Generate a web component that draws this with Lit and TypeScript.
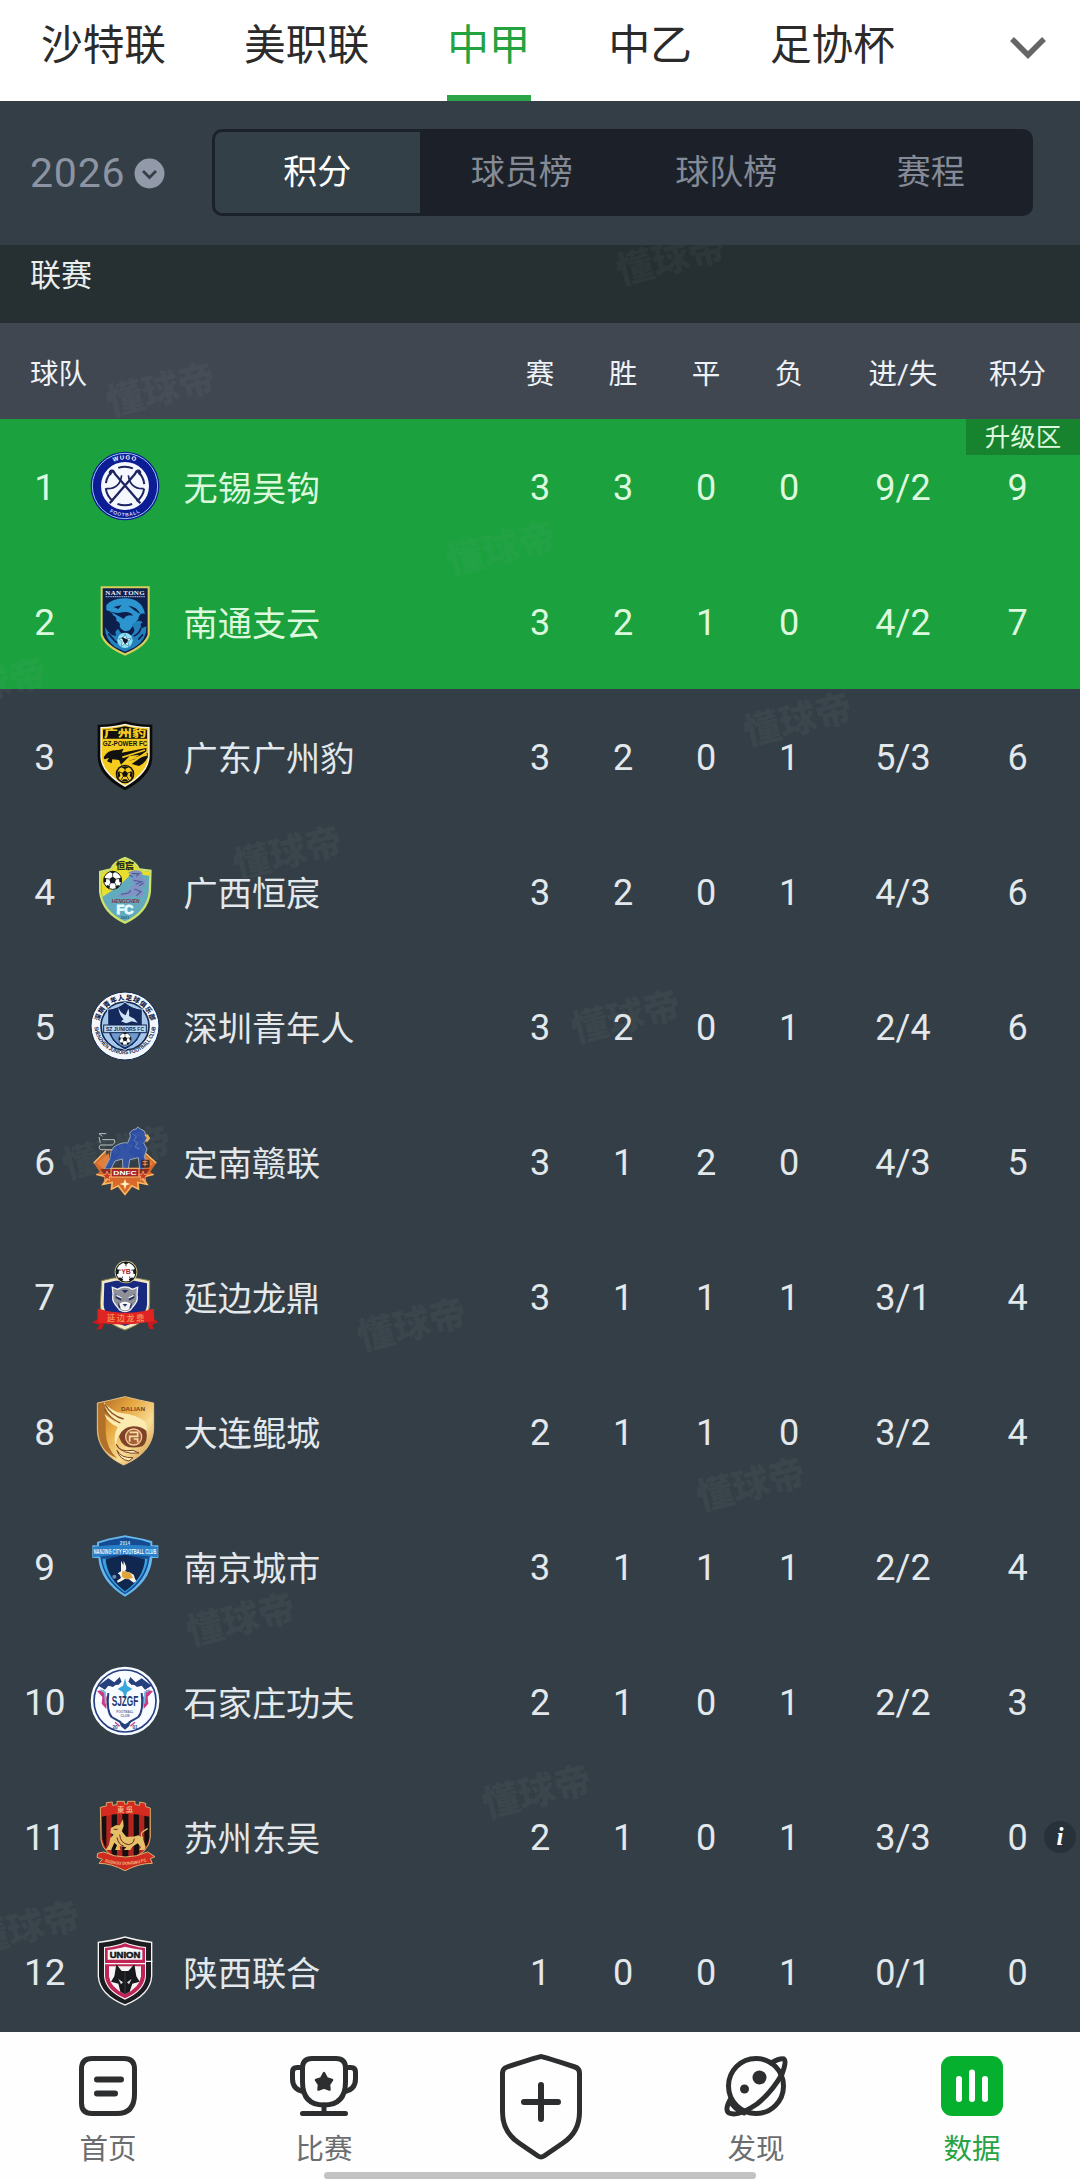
import { LitElement, html, svg, css } from 'lit';
import { customElement, property, state } from 'lit/decorators.js';
import { classMap } from 'lit/directives/class-map.js';
import { styleMap } from 'lit/directives/style-map.js';

interface Team {
  rank: number;
  name: string;
  crest: string;
  stats: number[];
  goals: string;
  points: number;
  info?: boolean;
}

const TEAMS: Team[] = [
  { rank: 1, name: '无锡吴钩', crest: 'wuxi', stats: [3, 3, 0, 0], goals: '9/2', points: 9 },
  { rank: 2, name: '南通支云', crest: 'nantong', stats: [3, 2, 1, 0], goals: '4/2', points: 7 },
  { rank: 3, name: '广东广州豹', crest: 'guangzhou', stats: [3, 2, 0, 1], goals: '5/3', points: 6 },
  { rank: 4, name: '广西恒宸', crest: 'guangxi', stats: [3, 2, 0, 1], goals: '4/3', points: 6 },
  { rank: 5, name: '深圳青年人', crest: 'shenzhen', stats: [3, 2, 0, 1], goals: '2/4', points: 6 },
  { rank: 6, name: '定南赣联', crest: 'dingnan', stats: [3, 1, 2, 0], goals: '4/3', points: 5 },
  { rank: 7, name: '延边龙鼎', crest: 'yanbian', stats: [3, 1, 1, 1], goals: '3/1', points: 4 },
  { rank: 8, name: '大连鲲城', crest: 'dalian', stats: [2, 1, 1, 0], goals: '3/2', points: 4 },
  { rank: 9, name: '南京城市', crest: 'nanjing', stats: [3, 1, 1, 1], goals: '2/2', points: 4 },
  { rank: 10, name: '石家庄功夫', crest: 'sjz', stats: [2, 1, 0, 1], goals: '2/2', points: 3 },
  { rank: 11, name: '苏州东吴', crest: 'suzhou', stats: [2, 1, 0, 1], goals: '3/3', points: 0, info: true },
  { rank: 12, name: '陕西联合', crest: 'shaanxi', stats: [1, 0, 0, 1], goals: '0/1', points: 0 },
];

const MARKS = [
  [671, 260], [161, 391], [501, 550], [-8, 686], [798, 721], [288, 854], [626, 1018],
  [117, 1154], [412, 1326], [751, 1486], [241, 1621], [537, 1793], [26, 1929],
];

// football used inside several crests
const ball = (x: number, y: number, r: number) => svg`
  <g transform="translate(${x} ${y}) scale(${r / 30})">
    <circle r="29" fill="#fff" stroke="#15181c" stroke-width="3"/>
    <g fill="#15181c">
      <path d="M0-12 11-4 7 9-7 9-11-4Z"/>
      <path d="M-10-28 0-21 10-28Q0-32-10-28ZM28-10 20-6 22 6 29 6ZM-28-10-20-6-22 6-29 6ZM8 20 18 15 22 20 12 28ZM-8 20-18 15-22 20-12 28Z"/>
    </g>
    <path d="M0-12V-22M11-4 21-6M7 9 12 18M-7 9-12 18M-11-4-21-6" stroke="#15181c" stroke-width="2.5"/>
  </g>`;

const CRESTS: Record<string, unknown> = {
  wuxi: svg`
    <circle cx="108" cy="108" r="103" fill="#0b1c94"/>
    <circle cx="108" cy="108" r="98" fill="none" stroke="#9cc4f4" stroke-width="3"/>
    <circle cx="108" cy="108" r="72" fill="#f5f8ff"/>
    <circle cx="108" cy="108" r="58" fill="none" stroke="#1d2460" stroke-width="6" stroke-dasharray="45 15.7" stroke-dashoffset="-8"/>
    <path d="M62 160 138 72Q142 60 150 62 157 66 150 74M154 160 78 72Q74 60 66 62 59 66 66 74" fill="none" stroke="#1d2460" stroke-width="7"/>
    <path d="M52 116Q92 118 98 76M164 116Q124 118 118 76" fill="none" stroke="#1d2460" stroke-width="5"/>
    <path id="wTop" d="M28 108A80 80 0 0 1 188 108" fill="none"/>
    <path id="wBot" d="M17 108A91 91 0 0 0 199 108" fill="none"/>
    <text class="lt" font-size="18" font-weight="700" fill="#fff" letter-spacing="3"><textPath href="#wTop" startOffset="50%" text-anchor="middle">WUGO</textPath></text>
    <text class="lt" font-size="15" font-weight="700" fill="#c9d6ff" letter-spacing="2"><textPath href="#wBot" startOffset="50%" text-anchor="middle">FOOTBALL</textPath></text>`,
  nantong: svg`
    <path d="M35 4H182V150Q172 186 108 212 45 186 35 150Z" fill="#d8cf5a"/>
    <path d="M41 10H176V148Q167 180 108 205 50 180 41 148Z" fill="#0d1f4c"/>
    <text class="serif" x="108" y="29" font-size="21" font-weight="700" fill="#e6eefc" text-anchor="middle" textLength="118">NAN TONG</text>
    <path d="M50 35H168" stroke="#90a7d0" stroke-width="4" stroke-dasharray="4 1.5"/>
    <path d="M52 60Q72 38 112 40 158 42 168 86 150 82 148 102 134 118 122 136 104 144 92 126 96 112 82 108 84 96 74 92 66 78 52 76 58 68Z" fill="#2c94cf"/>
    <path d="M74 66 98 60 88 72ZM60 78Q84 88 100 82 124 78 132 92 112 88 104 102 92 94 60 78ZM118 62Q146 66 154 88L136 76Z" fill="#0d1f4c"/>
    <path d="M48 126Q64 154 82 152 74 138 88 132 100 158 128 150 144 134 128 120 148 100 162 112 150 116 158 130L172 124Q174 164 138 186L108 200 78 186Q48 162 48 126Z" fill="#2382bd"/>
    <path d="M134 154Q152 146 156 128M68 158 84 174M58 146 76 166M148 164 162 148" stroke="#0d1f4c" stroke-width="5" fill="none"/>
    <circle cx="108" cy="166" r="23" fill="#8fe0f5"/>
    <path d="M108 146 113 160 127 161 116 170 120 184 108 176 96 184 100 170 89 161 103 160Z" fill="#e9fbff" stroke="#2f7fa8" stroke-width="2"/>
    <path d="M98 156 118 164 114 172 108 178 102 168Z" fill="#0b1830"/>`,
  guangzhou: svg`
    <path d="M26 14Q74 14 108 3 142 14 190 14V110Q190 168 108 211 26 168 26 110Z" fill="#0b0b0c"/>
    <path d="M34 21Q76 20 108 11 140 20 182 21V110Q180 160 108 201 36 160 34 110Z" fill="#f8f5e2"/>
    <path d="M38 25Q78 24 108 16 138 24 178 25V110Q176 156 108 196 40 156 38 110Z" fill="#f6cb1f"/>
    <path d="M42 29Q78 27 108 19 138 27 174 29V56H42Z" fill="#111"/>
    <text class="cn" x="108" y="51" font-size="31" font-weight="900" fill="#f6cb1f" text-anchor="middle" textLength="128" lengthAdjust="spacingAndGlyphs">广州豹</text>
    <text class="lt" x="108" y="77" font-size="19" font-weight="700" fill="#17150c" text-anchor="middle" textLength="134" lengthAdjust="spacingAndGlyphs">GZ-POWER FC</text>
    <path d="M44 112Q56 88 88 90L104 86 98 98 172 84V94L138 118 120 122 152 104 122 108 96 134 90 120 70 118 68 130 54 124 60 114 46 118Z" fill="#111"/>
    <path d="M128 132 176 98V112Q168 130 150 138Z" fill="#111"/>
    <path d="M100 112 168 90M118 120 174 104" stroke="#f6cb1f" stroke-width="5"/>
    <circle cx="108" cy="162" r="28" fill="#111"/>
    <circle cx="108" cy="162" r="23" fill="#f6cb1f"/>
    <path d="M108 152 117 159 114 170H102L99 159ZM96 142 108 139 120 142 108 147ZM85 158 91 154 94 168 88 174ZM131 158 125 154 122 168 128 174ZM98 184 103 178H113L118 184Z" fill="#111"/>
    <path d="M108 152V144M117 159 127 155M114 170 120 180M102 170 96 180M99 159 89 155" stroke="#111" stroke-width="2.5"/>`,
  guangxi: svg`
    <path d="M30 48 64 40Q72 18 108 5 144 18 152 40L188 44 186 112Q178 176 108 207 38 176 30 112Z" fill="#cfe36a"/>
    <path d="M36 54 68 46Q76 24 108 12 140 24 148 46L181 50 179 112Q172 170 108 199 44 170 37 112Z" fill="#62aabd"/>
    <path d="M36 54 68 46Q76 24 108 12 140 24 148 46L181 50V62L128 56 90 92 40 126Z" fill="#eadf2c"/>
    <text class="cn" x="108" y="41" font-size="27" font-weight="900" fill="#26301e" text-anchor="middle">恒宸</text>
    <path d="M118 52Q140 40 158 50 166 60 152 66 176 70 168 92 152 100 140 94 172 104 160 124 146 134 136 120 110 130 84 122 106 116 122 102 126 92 140 86 122 82 132 68Z" fill="#8392c4"/>
    <path d="M128 56H150L142 64M134 76 158 80 140 88M136 102 156 110 142 122M96 118 118 114 126 106M120 60 132 66M150 92 164 84" fill="none" stroke="#4a5f98" stroke-width="3.5"/>
    ${ball(71, 76, 28)}
    <text class="lt" x="110" y="143" font-size="14" font-weight="700" font-style="italic" fill="#852d42" text-anchor="middle" textLength="84" lengthAdjust="spacingAndGlyphs">HENGCHEN</text>
    <text class="lt" x="108" y="178" font-size="38" font-weight="700" fill="#e4fbff" stroke="#e4fbff" stroke-width="3" text-anchor="middle">FC</text>
    <text class="lt" x="108" y="193" font-size="12" font-weight="700" fill="#285d79" text-anchor="middle">2021</text>`,
  shenzhen: svg`
    <circle cx="108" cy="108" r="102" fill="#f4f8fc" stroke="#14274d" stroke-width="3"/>
    <circle cx="108" cy="108" r="72" fill="#a4c6ea" stroke="#14274d" stroke-width="5"/>
    <path id="sTop" d="M30 108A78 78 0 0 1 186 108" fill="none"/>
    <path id="sBot" d="M15 100A93 93 0 0 0 201 100" fill="none"/>
    <text class="cn" font-size="20" font-weight="900" fill="#14274d"><textPath href="#sTop" startOffset="50%" text-anchor="middle" textLength="215">深圳青年人足球俱乐部</textPath></text>
    <text class="lt" font-size="17" font-weight="700" fill="#14274d"><textPath href="#sBot" startOffset="50%" text-anchor="middle" textLength="270" lengthAdjust="spacingAndGlyphs">SHENZHEN JUNIORS FOOTBALL CLUB</textPath></text>
    <path d="M56 58Q90 54 108 36 126 54 160 58V112Q158 156 108 180 58 156 56 112Z" fill="#152a5c" stroke="#b8d5f2" stroke-width="3"/>
    <path d="M66 128H150Q144 156 108 172 72 156 66 128Z" fill="#6e9ad0"/>
    <path d="M88 52Q94 70 110 76L118 56Q122 66 120 78L136 86 146 98 128 94 112 100 96 94 104 88Q90 76 88 52Z" fill="#cfe2f6"/>
    <rect x="44" y="105" width="128" height="23" fill="#b8d5f2" stroke="#14274d" stroke-width="3"/>
    <text class="lt" x="108" y="123" font-size="17" font-weight="700" fill="#14274d" text-anchor="middle" textLength="114" lengthAdjust="spacingAndGlyphs">SZ JUNIORS FC</text>
    ${ball(108, 147, 19)}`,
  dingnan: svg`
    <path d="M14 114 50 76H162L202 114 184 140 196 150 166 158 178 180 150 176 152 196 130 186 108 212 86 186 64 196 66 176 38 180 50 158 20 150 32 140Z" fill="#d9692a"/>
    <path d="M50 78H164L150 128H60Z" fill="#343e46"/>
    <path d="M14 114 50 78M202 114 164 80M22 148 60 156 42 178 70 172 68 192 88 182 108 208 128 182 148 192 146 172 174 178 156 156 194 148" fill="none" stroke="#f4c06c" stroke-width="4"/>
    <path d="M24 114 60 84V130H40ZM192 114 158 84V130H178Z" fill="#e0803a"/>
    <path d="M76 74H34Q26 66 34 60H70Q82 54 76 44H40M40 34 30 26 52 26M34 54 30 36" fill="none" stroke="#b9c4bd" stroke-width="3"/>
    <path d="M74 66Q98 50 116 54L124 34 122 24 132 14 142 12 146 6 154 12 166 18 170 30 176 38 170 48 164 54 174 72 166 94 170 108 164 132H152L148 98 122 104 118 132H102L100 102 78 108 66 132H46L62 102 66 80Z" fill="#2d4ea4" stroke="#9ba8b2" stroke-width="3"/>
    <path d="M166 30 176 28 184 40 174 52 168 46 174 40Z" fill="#e6b05a"/>
    <path d="M132 26 142 36 134 46 146 54 138 66 152 72" fill="none" stroke="#5e79bd" stroke-width="3"/>
    <rect x="156" y="104" width="26" height="24" rx="4" fill="#442b2b"/>
    <path d="M161 110H176M161 118H176M168 106V124" stroke="#ef9853" stroke-width="3"/>
    <path d="M34 132H182L172 146H44Z" fill="#8d2b25"/>
    <rect x="66" y="130" width="84" height="26" fill="#a92725" stroke="#f4c06c" stroke-width="3"/>
    <text class="lt" x="108" y="149" font-size="17" font-weight="700" fill="#fff" text-anchor="middle" textLength="70" lengthAdjust="spacingAndGlyphs">DNFC</text>
    <path d="M54 138 58 148 68 150 60 156 62 166 54 160 46 166 48 156 40 150 50 148ZM162 138 166 148 176 150 168 156 170 166 162 160 154 166 156 156 148 150 158 148Z" fill="#cc392b" stroke="#f4c06c" stroke-width="2"/>
    <path d="M108 162 112 173 124 177 112 181 108 194 104 181 92 177 104 173Z" fill="#fff1bd"/>`,
  yanbian: svg`
    <path d="M38 62 74 54H142L182 62V130Q184 184 108 210 32 184 34 130Z" fill="#f2e9c4" stroke="#8c8756" stroke-width="3"/>
    <path d="M46 70 80 62H136L174 70V134Q170 178 108 198 46 178 44 134Z" fill="#172a80"/>
    <path d="M70 82 86 88Q108 74 130 88L146 82 144 104Q148 120 138 132L124 150Q108 160 92 150L78 132Q68 120 72 104Z" fill="#8f9098" stroke="#eef0f4" stroke-width="4"/>
    <path d="M80 102 98 112 96 122 80 114ZM136 102 118 112 120 122 136 114ZM98 90H118L108 100ZM86 126 94 140 90 146ZM130 126 122 140 126 146Z" fill="#25315f"/>
    <path d="M82 106 98 114M134 106 118 114M94 132Q108 122 122 132L118 146Q108 152 98 146Z" fill="#eceef2" stroke="#fff" stroke-width="4"/>
    <path d="M101 132H115L108 140Z" fill="#25315f"/>
    <circle cx="111" cy="36" r="34" fill="#d9cc91"/>
    ${ball(111, 36, 31)}
    <circle cx="111" cy="36" r="17" fill="#fff"/>
    <text class="lt" x="111" y="43" font-size="21" font-weight="700" fill="#b12530" text-anchor="middle">YB</text>
    <path d="M24 146 46 154V180L40 206 22 210 32 194 10 188 24 178ZM194 146 174 154V180L180 206 196 208 190 194 208 186 196 178Z" fill="#c61a1d"/>
    <path d="M28 146Q108 170 194 146V184Q108 200 28 188Z" fill="#e02422"/>
    <text class="cn" x="110" y="183" font-size="24" font-weight="500" fill="#f59b58" text-anchor="middle" textLength="112">延边龙鼎</text>`,
  dalian: svg`
    <defs>
      <linearGradient id="gold" x1="0" y1="0" x2="1" y2="1">
        <stop offset="0" stop-color="#a96323"/><stop offset=".35" stop-color="#e6a63e"/>
        <stop offset=".65" stop-color="#f8dd95"/><stop offset="1" stop-color="#c68231"/>
      </linearGradient>
    </defs>
    <path d="M25 24Q64 16 108 5 152 16 194 24V100Q192 172 104 210 28 176 25 106Z" fill="url(#gold)" stroke="#e8c487" stroke-width="3"/>
    <path d="M28 28Q40 24 50 22V112Q52 160 84 190 30 168 28 106Z" fill="#b2712a"/>
    <path d="M44 20Q66 48 96 54 142 58 170 82L174 106Q140 92 108 106 84 116 80 154 72 120 86 96 58 86 46 58L80 82Q54 58 44 20Z" fill="#fbebb0"/>
    <path d="M46 42Q64 72 94 84M48 28Q66 62 104 72" stroke="#8d5626" stroke-width="4" fill="none"/>
    <path d="M90 124Q98 98 132 94 160 94 172 108 178 140 160 154 128 162 108 152 94 142 90 124Z" fill="#7d4228"/>
    <circle cx="134" cy="126" r="24" fill="#a45f37" stroke="#f1cd93" stroke-width="4"/>
    <path d="M122 112H146V124H122V140M134 132H146V142" fill="none" stroke="#f6deaa" stroke-width="5"/>
    <path d="M82 148Q88 172 132 166L150 174Q98 180 82 148ZM84 166Q96 190 132 188L120 198Q92 194 84 166Z" fill="#fff2bd" stroke="#7d4228" stroke-width="3"/>
    <text class="lt" x="132" y="48" font-size="15" font-weight="700" fill="#71451d" text-anchor="middle" textLength="72" lengthAdjust="spacingAndGlyphs">DALIAN</text>`,
  nanjing: svg`
    <path d="M24 36 56 26 108 16 162 26 190 34V46H208V84H190Q184 156 108 200 34 156 28 84H10V46H24Z" fill="#66b7ed"/>
    <path d="M30 40 60 31 108 22 158 31 184 39V80H182Q176 150 108 193 42 150 34 80H30Z" fill="#154c91"/>
    <path d="M40 86H176Q170 144 108 188 46 144 40 86Z" fill="#38a0de"/>
    <path d="M50 88 108 74 168 88Q164 144 108 184 54 144 50 88Z" fill="#10274f"/>
    <path d="M12 50Q108 38 206 50V82Q108 66 12 82Z" fill="#2a7fc9"/>
    <text class="lt" x="108" y="44" font-size="14" font-weight="700" fill="#c7e4fa" text-anchor="middle">2014</text>
    <text class="lt" x="108" y="73" font-size="23" font-weight="700" fill="#e9fbff" text-anchor="middle" textLength="188" lengthAdjust="spacingAndGlyphs">NANJING CITY FOOTBALL CLUB</text>
    <path d="M96 92 103 106 104 92 111 108Q114 118 108 124L124 128 134 134 138 146 142 154 134 158 120 148 108 146 96 154 86 158 84 152 96 144 92 134 86 130 96 124 96 112Z" fill="#f7f2e6"/>
    <path d="M100 122 124 128 132 144 112 148 98 140Z" fill="#dca63c"/>
    <circle cx="76" cy="140" r="6" fill="#6d8cae"/>`,
  sjz: svg`
    <circle cx="108" cy="108" r="103" fill="#f8fbff"/>
    <circle cx="108" cy="108" r="93" fill="none" stroke="#243f83" stroke-width="5"/>
    <path d="M28 62 58 40 76 52 92 36 98 50 88 60Q80 58 72 66L58 62 48 74ZM188 62 158 40 140 52 124 36 118 50 128 60Q136 58 144 66L158 62 168 74Z" fill="#263f7d"/>
    <path d="M24 78 44 74 54 98 52 132 38 116 40 96ZM192 78 172 74 162 98 164 132 178 116 176 96Z" fill="#cc3a83"/>
    <path d="M34 74 48 82 50 116M182 74 168 82 166 116" fill="none" stroke="#7bbde2" stroke-width="5"/>
    <path d="M58 84Q52 138 68 156L96 172M158 84Q164 138 148 156L120 172" fill="none" stroke="#263f7d" stroke-width="6"/>
    <path d="M108 40 114 62 130 72 114 82 108 104 102 82 86 72 102 62Z" fill="#38a8dc"/>
    <text class="lt" x="108" y="124" font-size="45" font-weight="700" fill="#23396e" text-anchor="middle" textLength="80" lengthAdjust="spacingAndGlyphs">SJZGF</text>
    <text class="lt" x="108" y="144" font-size="10" font-weight="700" fill="#6d789b" text-anchor="middle" textLength="52">FOOTBALL</text>
    <text class="lt" x="108" y="157" font-size="10" font-weight="700" fill="#6d789b" text-anchor="middle">CLUB</text>
    <path d="M88 166 108 178 128 166 120 184 108 194 96 184Z" fill="#263f7d"/>
    <path d="M78 172 92 184M138 172 124 184" stroke="#cc3a83" stroke-width="4"/>
    <text class="lt" x="78" y="192" font-size="14" font-weight="700" fill="#263f7d" text-anchor="middle">20</text>
    <text class="lt" x="138" y="192" font-size="14" font-weight="700" fill="#263f7d" text-anchor="middle">01</text>`,
  suzhou: svg`
    <path d="M34 22 52 18V8L70 6V16L84 14V4H106V12H116V4H138V14L152 16V6L170 10V20L184 24V112Q182 160 108 186 42 164 36 120Z" fill="#d42a20" stroke="#d5a967" stroke-width="3"/>
    <clipPath id="dwBody"><path d="M38 50Q108 32 181 50V112Q178 156 108 182 46 160 40 116Z"/></clipPath>
    <g clip-path="url(#dwBody)">
      <rect x="34" y="34" width="150" height="152" fill="#b22420"/>
      <path d="M38 30H52V190H38ZM68 30H84V190H68ZM100 30H118V190H100ZM134 30H150V190H134ZM166 30H184V190H166Z" fill="#160f10"/>
    </g>
    <text class="cn" x="108" y="36" font-size="22" font-weight="700" fill="#f0a477" text-anchor="middle" textLength="48">東吳</text>
    <path d="M66 84 80 76 92 76 102 58 104 78 98 94 112 110Q132 112 148 106L160 112 166 128 170 140 166 150H150L156 142 146 130 130 140 124 150H104L112 142 92 138 94 150H78L84 136 76 128 70 142 66 150H50L60 134 64 114 74 104 64 98Z" fill="#e4bf68"/>
    <path d="M162 116Q150 100 166 92L176 86" fill="none" stroke="#e4bf68" stroke-width="4"/>
    <path d="M92 104Q94 130 118 134 134 132 136 116M84 112Q88 134 104 138M74 88H86" fill="none" stroke="#6d291d" stroke-width="3"/>
    <path d="M26 160 44 156Q108 186 176 156L198 170 184 176 190 190Q150 190 108 212 66 190 30 190L40 178 24 172Z" fill="#cf2b20" stroke="#d9b16e" stroke-width="3"/>
    <path id="dwRib" d="M38 182Q108 208 182 180" fill="none"/>
    <text class="lt" font-size="13" font-weight="700" fill="#f4c080"><textPath href="#dwRib" startOffset="50%" text-anchor="middle" textLength="128" lengthAdjust="spacingAndGlyphs">SUZHOU DONGWU FC</textPath></text>`,
  shaanxi: svg`
    <path d="M26 20Q76 14 108 4 142 14 190 20V124Q186 182 108 212 30 182 26 124Z" fill="#f6f4f5"/>
    <path d="M30 24Q78 18 108 8 140 18 186 24V124Q182 178 108 208 34 178 30 124Z" fill="#1c1d20"/>
    <path d="M45 36Q86 32 108 22 132 32 171 36V124Q168 168 108 194 48 168 45 124Z" fill="#f6f4f5"/>
    <path d="M48 39Q88 35 108 25 130 35 168 39V124Q164 166 108 190 52 166 48 124Z" fill="#c02456"/>
    <path d="M56 45Q88 41 108 35 130 41 160 45V74H56Z" fill="#f6f4f5"/>
    <text class="lt" x="108" y="69" font-size="26" font-weight="700" fill="#141518" stroke="#141518" stroke-width="1.5" text-anchor="middle" textLength="92" lengthAdjust="spacingAndGlyphs">UNION</text>
    <path d="M60 94H156V124Q152 158 108 178 64 158 60 124Z" fill="#f6f4f5"/>
    <path d="M168 79H190M48 86H168" stroke="#f6f4f5" stroke-width="4"/>
    <path d="M82 88 98 108H118L136 88 142 124 152 140 130 146 122 170 108 178 94 170 88 146 66 140 76 124Z" fill="#18191c"/>
    <path d="M88 132 102 142 96 148ZM128 132 114 142 120 148Z" fill="#d8d8dc"/>
    <path d="M108 108V176" stroke="#4a4c52" stroke-width="2"/>`,
};

@customElement('team-crest')
export class TeamCrest extends LitElement {
  static styles = css`
    :host {
      display: block;
      width: 72px;
      height: 72px;
    }
    svg {
      display: block;
      width: 100%;
      height: 100%;
    }
    .lt {
      font-family: "Liberation Sans", sans-serif;
    }
    .serif {
      font-family: "Liberation Serif", serif;
    }
    .cn {
      font-family: "Noto Sans CJK SC", sans-serif;
    }
  `;

  @property() name = '';

  render() {
    return html`<svg viewBox="0 0 216 216">${CRESTS[this.name]}</svg>`;
  }
}

@customElement('standings-table')
export class StandingsTable extends LitElement {
  static styles = css`
    :host {
      display: block;
    }
    .row {
      display: grid;
      grid-template-columns: 88.5px 95px 315px repeat(4, 83px) 145px 84px 1fr;
      align-items: center;
      height: 135px;
      color: #e2e8eb;
      font-size: 36px;
      text-align: center;
      position: relative;
    }
    .head {
      height: 96px;
      background: #404751;
      color: #eef2f6;
      font-size: 28.5px;
    }
    .head .team {
      grid-column: 1 / 4;
      padding-left: 30px;
      text-align: left;
    }
    .up {
      background: #1ba13e;
      color: #ddf9dd;
    }
    .rank {
      padding-left: 1px;
      font-size: 37px;
    }
    .name {
      padding-bottom: 2px;
      font-size: 34.2px;
      text-align: left;
    }
    .cell {
      padding-top: 2px;
    }
    team-crest {
      margin-top: -1px;
    }
    .zone {
      position: absolute;
      top: 0;
      right: 0;
      width: 114px;
      height: 36px;
      line-height: 36px;
      box-sizing: border-box;
      background: #17832f;
      font-size: 25.5px;
    }
    .info {
      position: absolute;
      right: 4px;
      top: 52px;
      width: 32px;
      height: 32px;
      border-radius: 50%;
      background: #27313a;
      font: italic 700 25px/31px "Liberation Serif", serif;
      color: #fff;
    }
  `;

  render() {
    return html`
      <div class="row head">
        <span class="team">球队</span>
        ${['赛', '胜', '平', '负', '进/失', '积分'].map((h) => html`<span>${h}</span>`)}
      </div>
      ${TEAMS.map((t) => this._row(t))}
    `;
  }

  _row(t: Team) {
    return html`
      <div class=${classMap({ row: true, up: t.rank < 3 })}>
        <span class="cell rank">${t.rank}</span>
        <team-crest name=${t.crest}></team-crest>
        <span class="name">${t.name}</span>
        ${t.stats.map((n) => html`<span class="cell">${n}</span>`)}
        <span class="cell">${t.goals}</span>
        <span class="cell">${t.points}</span>
        ${t.rank === 1 ? html`<span class="zone">升级区</span>` : ''}
        ${t.info ? html`<span class="info">i</span>` : ''}
      </div>
    `;
  }
}

const NAV = [
  {
    label: '首页',
    icon: svg`<path d="M16 6.500H48Q58.500 6.500 58.500 17V42Q58.500 61.500 41 61.500H16Q5.500 61.500 5.500 51V17Q5.500 6.500 16 6.500Z"/>
      <path d="M21 27.500H45M21 41.500H39" stroke-width="6"/>`,
  },
  {
    label: '比赛',
    icon: svg`<path d="M20 6.500H44Q53.500 6.500 53.500 16V30Q53.500 53 32 53 10.500 53 10.500 30V16Q10.500 6.500 20 6.500Z"/>
      <path d="M10 15.500H5Q.5 15.500 .5 20V27Q.5 37 11 39.500M54 15.500H59Q63.500 15.500 63.500 20V27Q63.500 37 53 39.500M32 53V60M10.500 61.500H53.500"/>
      <path d="M32 21 35 26.500 40 28 37 32.500 37.500 37.500 32 35.500 26.500 37.500 27 32.500 24 28 29 26.500Z" fill="#2c2e2f" stroke-width="2.500"/>`,
  },
  { label: '', icon: '' },
  {
    label: '发现',
    icon: svg`<circle cx="32" cy="34" r="27.500"/>
      <path d="M47 11Q56 6 60 7 63 9 58 22 48 40 33 52 14 65 5 61 .5 58 6 48M6 49Q10 57 20 61"/>
      <circle cx="35.500" cy="25.500" r="7" class="dot"/><circle cx="20.500" cy="37" r="4.500" class="dot"/>`,
  },
  {
    label: '数据',
    icon: svg`<rect x="1" y="4" width="62" height="60" rx="11" fill="#05b02f" stroke="none"/>
      <path d="M19 27V47M32 20.500V47M45 27V47" stroke="#fff" stroke-width="6"/>`,
  },
];

@customElement('app-root')
export class AppRoot extends LitElement {
  static styles = css`
    :host {
      display: flex;
      flex-direction: column;
      position: relative;
      width: 1080px;
      height: 2180px;
      overflow: hidden;
      background: #343e46;
      font-family: Roboto, "Noto Sans CJK SC", sans-serif;
      font-weight: 400;
    }
    .leagues {
      display: flex;
      gap: 78px;
      flex: none;
      height: 101px;
      padding: 0 33px 0 41px;
      box-sizing: border-box;
      background: #fff;
      color: #2b2b2b;
      font-size: 41.700px;
    }
    .league {
      line-height: 92px;
      height: 101px;
      box-sizing: border-box;
      white-space: nowrap;
    }
    .league.on {
      color: #23a33f;
      border-bottom: 6px solid #2ba548;
    }
    .more {
      margin: 34px 0 0 auto;
      width: 38px;
      height: 26px;
    }
    .bar {
      display: flex;
      flex: none;
      align-items: center;
      height: 144px;
      padding-left: 30px;
    }
    .season {
      display: flex;
      align-items: center;
      width: 182px;
      gap: 9px;
      color: #8c93a2;
      font-size: 41px;
      letter-spacing: 0.8px;
    }
    .season svg {
      width: 31px;
      height: 31px;
    }
    .segments {
      display: flex;
      width: 821px;
      height: 87px;
      margin-top: -1px;
      border-radius: 10px;
      background: #1c2129;
    }
    .segment {
      flex: 1;
      line-height: 87px;
      text-align: center;
      color: #848a96;
      font-size: 34px;
    }
    .segment.on {
      margin: 3px 0 3px 3px;
      line-height: 81px;
      background: #334047;
      border-radius: 7px 0 0 7px;
      color: #fff;
    }
    .stage {
      flex: none;
      height: 78px;
      padding-left: 30px;
      line-height: 62px;
      box-sizing: border-box;
      background: #262f31;
      color: #e9eeee;
      font-size: 31px;
    }
    .list {
      flex: none;
      height: 1709px;
      overflow: hidden;
    }
    .marks {
      position: absolute;
      inset: 245px 0 148px 0;
      overflow: hidden;
      pointer-events: none;
    }
    .mark {
      position: absolute;
      width: 120px;
      margin: -27px 0 0 -60px;
      line-height: 54px;
      text-align: center;
      font-size: 37px;
      font-weight: 900;
      color: rgba(160, 178, 180, 0.075);
      transform: rotate(-14deg);
    }
    .nav {
      display: grid;
      grid-template-columns: repeat(5, 1fr);
      flex: none;
      height: 148px;
      background: #fefefe;
      position: relative;
    }
    .tab {
      display: flex;
      flex-direction: column;
      align-items: center;
      padding-top: 20px;
      color: #6b6d6f;
      font-size: 28.500px;
      line-height: 40px;
    }
    .tab.on {
      color: #27a344;
    }
    .tab svg {
      width: 64px;
      height: 68px;
      margin-bottom: 10px;
      overflow: visible;
      fill: none;
      stroke: #2c2e2f;
      stroke-width: 5;
      stroke-linecap: round;
      stroke-linejoin: round;
    }
    .tab svg.post {
      width: 84px;
      height: 106px;
      padding-left: 1px;
    }
    .tab .dot {
      fill: #2c2e2f;
      stroke: none;
    }
    .home {
      position: absolute;
      left: 324px;
      bottom: 1px;
      width: 432px;
      height: 7px;
      border-radius: 4px;
      background: #c3c3c3;
    }
  `;

  @state() league = '中甲';
  @state() segment = '积分';
  @state() tab = '数据';

  render() {
    return html`
      <div class="leagues">
        ${['沙特联', '美职联', '中甲', '中乙', '足协杯'].map(
          (l) => html`<span class=${classMap({ league: true, on: l === this.league })} @click=${() => (this.league = l)}>${l}</span>`
        )}
        <svg class="more" viewBox="0 0 38 26"><path d="M3 5 19 21 35 5" fill="none" stroke="#666" stroke-width="5.500"/></svg>
      </div>
      <div class="bar">
        <div class="season">
          <span>2026</span>
          <svg viewBox="0 0 31 31"><circle cx="15.500" cy="15.500" r="15" fill="#9299a8"/><path d="M9 13 15.500 19.500 22 13" fill="none" stroke="#343e46" stroke-width="2.800"/></svg>
        </div>
        <div class="segments">
          ${['积分', '球员榜', '球队榜', '赛程'].map(
            (s) => html`<span class=${classMap({ segment: true, on: s === this.segment })} @click=${() => (this.segment = s)}>${s}</span>`
          )}
        </div>
      </div>
      <div class="stage">联赛</div>
      <div class="list"><standings-table></standings-table></div>
      <div class="nav">
        ${NAV.map((n) =>
          n.label
            ? html`<div class=${classMap({ tab: true, on: n.label === this.tab })} @click=${() => (this.tab = n.label)}>
                <svg viewBox="0 0 64 68">${n.icon}</svg>
                <span>${n.label}</span>
              </div>`
            : html`<div class="tab">
                <svg class="post" viewBox="0 0 84 106">
                  <path d="M42 4.500Q44 4.500 76 15 80.500 16.500 80.500 21V60Q80.500 80 64 91L45 104Q42 106 39 104L20 91Q3.500 80 3.500 60V21Q3.500 16.500 8 15 40 4.500 42 4.500Z"/>
                  <path d="M25 50H59M42 33V67" stroke-width="6"/>
                </svg>
              </div>`
        )}
        <div class="home"></div>
      </div>
      <div class="marks">
        ${MARKS.map(
          ([x, y]) => html`<span class="mark" style=${styleMap({ left: `${x}px`, top: `${y - 245}px` })}>懂球帝</span>`
        )}
      </div>
    `;
  }
}
